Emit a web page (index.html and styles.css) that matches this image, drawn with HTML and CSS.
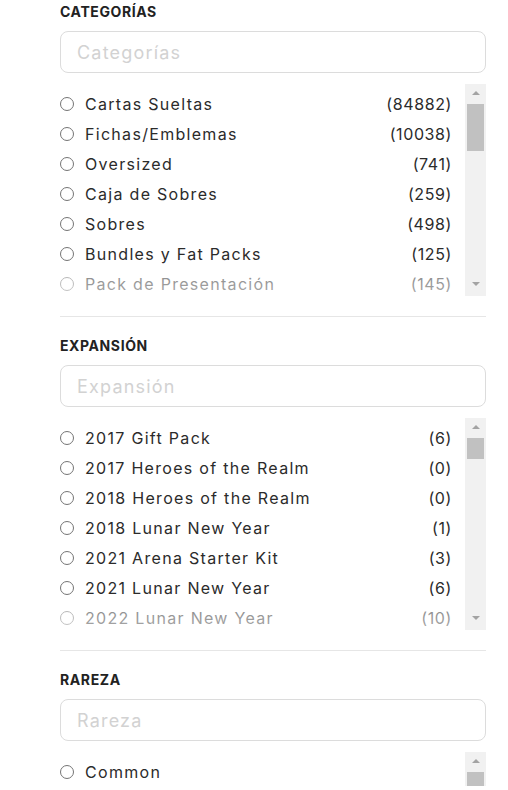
FILE: index.html
```html
<!DOCTYPE html>
<html lang="es">
<head>
<meta charset="utf-8">
<title>Filtros</title>
<link rel="stylesheet" href="styles.css">
</head>
<body>
<div class="filters">
  <section class="filter">
    <h3 class="filter-title">CATEGORÍAS</h3>
    <input class="filter-search" type="text" placeholder="Categorías">
    <div class="filter-box">
      <ul class="options">
        <li class="option"><span class="radio"></span><span class="label">Cartas Sueltas</span><span class="count">(84882)</span></li>
        <li class="option"><span class="radio"></span><span class="label">Fichas/Emblemas</span><span class="count">(10038)</span></li>
        <li class="option"><span class="radio"></span><span class="label">Oversized</span><span class="count">(741)</span></li>
        <li class="option"><span class="radio"></span><span class="label">Caja de Sobres</span><span class="count">(259)</span></li>
        <li class="option"><span class="radio"></span><span class="label">Sobres</span><span class="count">(498)</span></li>
        <li class="option"><span class="radio"></span><span class="label">Bundles y Fat Packs</span><span class="count">(125)</span></li>
        <li class="option"><span class="radio"></span><span class="label">Pack de Presentación</span><span class="count">(145)</span></li>
      </ul>
      <div class="scrollbar">
        <span class="arrow up"></span>
        <div class="track"><span class="thumb thumb-big"></span></div>
        <span class="arrow down"></span>
      </div>
    </div>
  </section>
  <section class="filter">
    <h3 class="filter-title">EXPANSIÓN</h3>
    <input class="filter-search" type="text" placeholder="Expansión">
    <div class="filter-box">
      <ul class="options">
        <li class="option"><span class="radio"></span><span class="label">2017 Gift Pack</span><span class="count">(6)</span></li>
        <li class="option"><span class="radio"></span><span class="label">2017 Heroes of the Realm</span><span class="count">(0)</span></li>
        <li class="option"><span class="radio"></span><span class="label">2018 Heroes of the Realm</span><span class="count">(0)</span></li>
        <li class="option"><span class="radio"></span><span class="label">2018 Lunar New Year</span><span class="count">(1)</span></li>
        <li class="option"><span class="radio"></span><span class="label">2021 Arena Starter Kit</span><span class="count">(3)</span></li>
        <li class="option"><span class="radio"></span><span class="label">2021 Lunar New Year</span><span class="count">(6)</span></li>
        <li class="option"><span class="radio"></span><span class="label">2022 Lunar New Year</span><span class="count">(10)</span></li>
      </ul>
      <div class="scrollbar">
        <span class="arrow up"></span>
        <div class="track"><span class="thumb thumb-small"></span></div>
        <span class="arrow down"></span>
      </div>
    </div>
  </section>
  <section class="filter">
    <h3 class="filter-title">RAREZA</h3>
    <input class="filter-search" type="text" placeholder="Rareza">
    <div class="filter-box filter-box-last">
      <ul class="options">
        <li class="option"><span class="radio"></span><span class="label">Common</span></li>
      </ul>
      <div class="scrollbar">
        <span class="arrow up"></span>
        <div class="track"><span class="thumb thumb-big"></span></div>
      </div>
    </div>
  </section>
</div>
</body>
</html>
```
FILE: styles.css
```css
* { box-sizing: border-box; }
html, body { margin: 0; padding: 0; background: #fff; }
body {
  font-family: "Inter", "Open Sans", "Liberation Sans", sans-serif;
  color: #2b2b2b;
  overflow: hidden;
  height: 790px;
}
.filters {
  padding: 4px 22px 0 60px;
  display: flex;
  flex-direction: column;
}
.filter {
  display: flex;
  flex-direction: column;
  padding-bottom: 20px;
  margin-bottom: 21px;
  border-bottom: 1px solid #e6e6e6;
}
.filter-title {
  margin: 0;
  font-size: 14px;
  line-height: 16px;
  font-weight: 700;
  color: #222;
  letter-spacing: 0.6px;
}
.filter-search {
  margin-top: 11px;
  height: 42px;
  width: 100%;
  border: 1px solid #dcdcdc;
  border-radius: 8px;
  padding: 0 16px;
  font-family: inherit;
  font-size: 18px;
  letter-spacing: 1.2px;
  color: #333;
  background: #fff;
  outline: none;
}
.filter-search::placeholder { color: #d2d2d2; letter-spacing: 1.2px; }
.filter-box {
  margin-top: 11px;
  height: 212px;
  display: flex;
  overflow: hidden;
}
.filter-box-last { height: 34px; }
.options {
  position: relative;
  list-style: none;
  margin: 0;
  padding: 5px 13px 0 0;
  flex: 1;
  overflow: hidden;
}
.options::after {
  content: "";
  position: absolute;
  left: 0; right: 0; bottom: 0;
  height: 32px;
  background: linear-gradient(rgba(255,255,255,0.4), rgba(255,255,255,0.6));
}
.filter-box-last .options::after { display: none; }
.option {
  height: 30px;
  display: flex;
  align-items: center;
  font-size: 16px;
  letter-spacing: 1.3px;
}
.radio {
  width: 14px;
  height: 14px;
  border: 1px solid #747474;
  border-radius: 50%;
  margin-right: 11px;
  flex: none;
  background: #fff;
}
.label { flex: 1; white-space: nowrap; }
.count { flex: none; letter-spacing: 0.6px; }
.scrollbar {
  width: 21px;
  flex: none;
  background: #f1f1f1;
  display: flex;
  flex-direction: column;
  align-items: center;
  padding-bottom: 4px;
}
.arrow {
  height: 17px;
  width: 100%;
  flex: none;
  display: flex;
  justify-content: center;
  align-items: center;
}
.arrow::before {
  content: "";
  width: 0; height: 0;
  border-left: 4px solid transparent;
  border-right: 4px solid transparent;
}
.arrow.up::before { border-bottom: 4px solid #a3a3a3; }
.arrow.down::before { border-top: 4px solid #a3a3a3; }
.track {
  flex: 1;
  width: 100%;
  padding: 3px 2px 0;
}
.thumb {
  display: block;
  background: #c1c1c1;
  width: 100%;
}
.thumb-big { height: 47px; }
.thumb-small { height: 21px; }
```
